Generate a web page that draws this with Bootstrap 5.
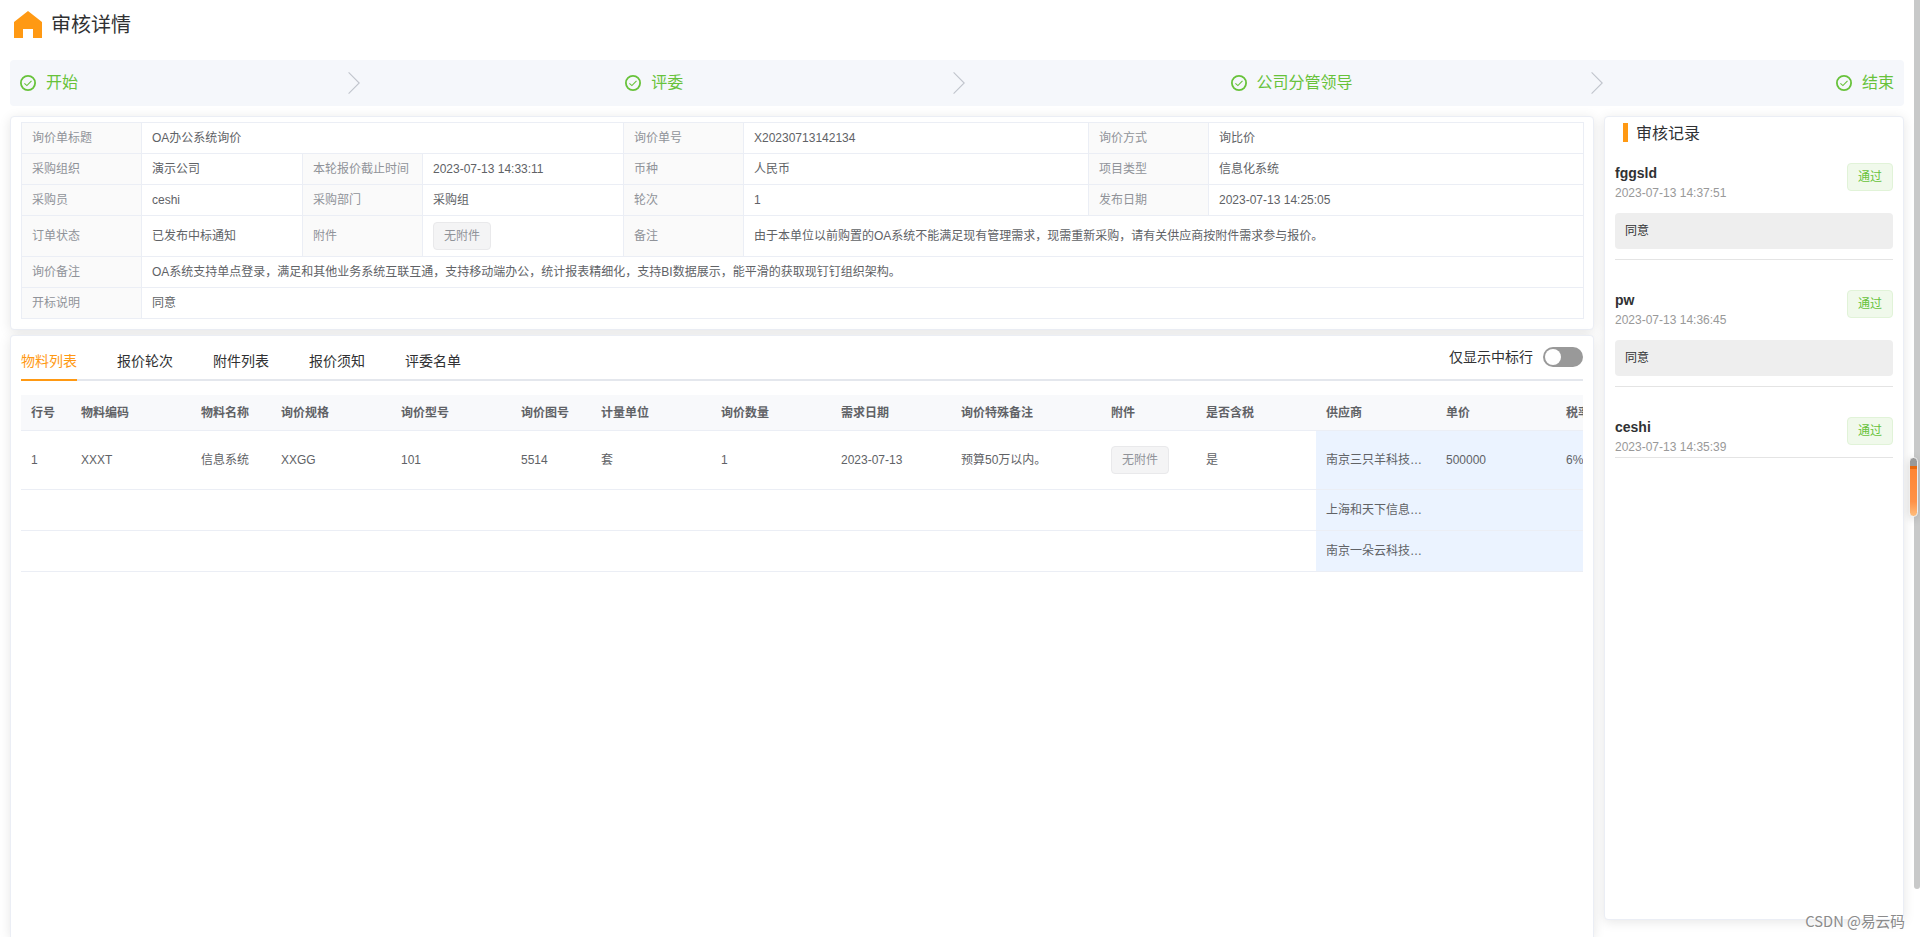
<!DOCTYPE html>
<html lang="zh-CN">
<head>
<meta charset="utf-8">
<title>审核详情</title>
<link rel="stylesheet" href="https://cdn.jsdelivr.net/npm/bootstrap@5.3.0/dist/css/bootstrap.min.css">
<style>
body{font-family:"Liberation Sans","Noto Sans CJK SC",sans-serif;font-size:12px;line-height:20px;color:#606266;background:#fff;height:937px}
.page-title{height:60px;padding:9px 0 0 10px;font-size:20px;line-height:32px;color:#303133}
.steps{height:46px;margin:0 16px 10px 10px;padding:0 10px;background:#f5f7fb;border-radius:4px;color:#67c23a;font-size:16px}
.steps .step{width:605.3px}
.steps svg.ok{margin-right:10px}
.steps .arrow{padding-left:5px}
.panel{background:#fff;border:1px solid #ebeef5;border-radius:4px;box-shadow:0 2px 12px rgba(0,0,0,.1)}
.main-col{width:1584px}
.side-col{width:300px;height:804px;margin-left:10px;padding:6px 10px 0;color:#303133}
.panel-info{height:214px;padding:5px 10px}
.panel-list{height:602px;margin-top:5px;padding:0 10px;border-bottom:0;border-radius:4px 4px 0 0}
.info{table-layout:fixed;width:1563px;border-collapse:collapse}
.info th,.info td{border:1px solid #ebeef5;padding:0 10px;height:31px;font-weight:400;white-space:nowrap}
.info th{background:#fafafa;color:#909399}
.info tr.tall>*{height:41px}
.tag{display:inline-block;height:28px;line-height:26px;padding:0 10px;border:1px solid #e9e9eb;border-radius:4px;background:#f4f4f5;color:#909399;vertical-align:middle}
.tag-ok{background:#f0f9eb;border-color:#e1f3d8;color:#67c23a}
.tabs{height:45px;border-bottom:2px solid #e4e7ed;font-size:14px;color:#303133}
.tabs .tab{height:45px;line-height:50px;margin-right:40px}
.tabs .tab.on{color:#ff9913;border-bottom:2px solid #ff9913}
.tabs .only-win{height:42px}
.toggle{width:40px;height:20px;border-radius:10px;background:#999;padding:2px;margin-left:10px}
.toggle i{display:block;width:16px;height:16px;border-radius:50%;background:#fff}
.items-wrap{width:1562px;margin-top:14px;overflow:hidden}
.items{table-layout:fixed;width:1655px;border-collapse:separate;border-spacing:0}
.items th,.items td{border-bottom:1px solid #ebeef5;padding:0 10px;white-space:nowrap;overflow:hidden;height:41px}
.items th{background:#f8f9fb;height:36px;font-weight:700}
.items tr.first td{height:59px}
.items td.win{background:#ebf3ff}
.side-title{font-size:16px;line-height:22px;height:20px;margin-left:8px}
.side-title span{width:5px;height:19px;background:#ff9913;margin-right:8px}
.log{height:127px;padding-top:30px}
.log.top{height:117px;padding-top:20px}
.log .inner{border-bottom:1px solid #e4e4e4;height:97px}
.log.short .inner{height:41px}
.log .who{font-size:14px;font-weight:700;line-height:20px}
.log .when{color:#999;line-height:20px;height:18px}
.log .say{height:36px;line-height:37px;margin-top:12px;padding:0 10px;border-radius:4px;background:#eee}
.thumb{right:0;top:0;width:6px;height:889px;background:#c8c9c9;border-radius:0 0 3px 3px}
.grip{left:1909px;top:457px;width:9px;height:60px;border:1px solid #eee;border-radius:5px;background:linear-gradient(#999 0 8px,#e8690f 8px 11px,#ff8533 11px,#ff9248 75%,#ffbd7c);box-shadow:0 2px 8px rgba(0,0,0,.15)}
.mark-text{right:15px;top:910px;font-family:"Noto Sans CJK SC",sans-serif;font-size:14.7px;line-height:22px;color:#8b8b8b;text-shadow:1px 1px 0 #fff}
</style>
</head>
<body class="position-relative overflow-hidden">
<svg class="d-none"><symbol id="ok" viewBox="0 0 16 16"><circle cx="8" cy="8" r="7.1" fill="none" stroke="#67c23a" stroke-width="1.8"/><path d="M4.4 8.3l2.5 2.3 4.6-4.7" fill="none" stroke="#67c23a" stroke-width="1.1"/></symbol>
<symbol id="arr" viewBox="0 0 12 22"><path d="M.6.4L11.2 11 .6 21.6" fill="none" stroke="#c0c4cc" stroke-width="1.1"/></symbol></svg>

<header class="page-title d-flex align-items-start">
  <svg width="37" height="32" viewBox="0 0 37 32" class="me-1"><path d="M18 2L4 13V29h9v-9h10v9h9V13z" fill="#ff9913"/></svg>
  <span>审核详情</span>
</header>

<div class="steps d-flex align-items-center">
  <div class="step d-flex align-items-center flex-shrink-0"><svg class="ok" width="16" height="16"><use href="#ok"/></svg><span>开始</span><div class="arrow flex-fill d-flex justify-content-center"><svg width="12" height="22"><use href="#arr"/></svg></div></div>
  <div class="step d-flex align-items-center flex-shrink-0"><svg class="ok" width="16" height="16"><use href="#ok"/></svg><span>评委</span><div class="arrow flex-fill d-flex justify-content-center"><svg width="12" height="22"><use href="#arr"/></svg></div></div>
  <div class="step d-flex align-items-center flex-shrink-0"><svg class="ok" width="16" height="16"><use href="#ok"/></svg><span>公司分管领导</span><div class="arrow flex-fill d-flex justify-content-center"><svg width="12" height="22"><use href="#arr"/></svg></div></div>
  <div class="d-flex align-items-center text-nowrap"><svg class="ok" width="16" height="16"><use href="#ok"/></svg><span>结束</span></div>
</div>

<div class="d-flex align-items-start" style="margin-left:10px">
  <main class="main-col">
    <section class="panel panel-info">
      <table class="info">
        <colgroup><col style="width:120px"><col style="width:161px"><col style="width:120px"><col style="width:201px"><col style="width:120px"><col style="width:345px"><col style="width:120px"><col></colgroup>
        <tr><th>询价单标题</th><td colspan="3">OA办公系统询价</td><th>询价单号</th><td>X20230713142134</td><th>询价方式</th><td>询比价</td></tr>
        <tr><th>采购组织</th><td>演示公司</td><th>本轮报价截止时间</th><td>2023-07-13 14:33:11</td><th>币种</th><td>人民币</td><th>项目类型</th><td>信息化系统</td></tr>
        <tr><th>采购员</th><td>ceshi</td><th>采购部门</th><td>采购组</td><th>轮次</th><td>1</td><th>发布日期</th><td>2023-07-13 14:25:05</td></tr>
        <tr class="tall"><th>订单状态</th><td>已发布中标通知</td><th>附件</th><td><span class="tag">无附件</span></td><th>备注</th><td colspan="3">由于本单位以前购置的OA系统不能满足现有管理需求，现需重新采购，请有关供应商按附件需求参与报价。</td></tr>
        <tr><th>询价备注</th><td colspan="7">OA系统支持单点登录，满足和其他业务系统互联互通，支持移动端办公，统计报表精细化，支持BI数据展示，能平滑的获取现钉钉组织架构。</td></tr>
        <tr><th>开标说明</th><td colspan="7">同意</td></tr>
      </table>
    </section>
    <section class="panel panel-list">
      <nav class="tabs d-flex">
        <div class="tab on">物料列表</div><div class="tab">报价轮次</div><div class="tab">附件列表</div><div class="tab">报价须知</div><div class="tab">评委名单</div>
        <div class="only-win ms-auto d-flex align-items-center"><span>仅显示中标行</span><div class="toggle"><i></i></div></div>
      </nav>
      <div class="items-wrap">
        <table class="items">
          <colgroup><col style="width:50px"><col style="width:120px"><col style="width:80px"><col style="width:120px"><col style="width:120px"><col style="width:80px"><col style="width:120px"><col style="width:120px"><col style="width:120px"><col style="width:150px"><col style="width:95px"><col style="width:120px"><col style="width:120px"><col style="width:120px"><col style="width:120px"></colgroup>
          <tr><th>行号</th><th>物料编码</th><th>物料名称</th><th>询价规格</th><th>询价型号</th><th>询价图号</th><th>计量单位</th><th>询价数量</th><th>需求日期</th><th>询价特殊备注</th><th>附件</th><th>是否含税</th><th>供应商</th><th>单价</th><th>税率</th></tr>
          <tr class="first"><td>1</td><td>XXXT</td><td>信息系统</td><td>XXGG</td><td>101</td><td>5514</td><td>套</td><td>1</td><td>2023-07-13</td><td>预算50万以内。</td><td><span class="tag">无附件</span></td><td>是</td><td class="win">南京三只羊科技…</td><td class="win">500000</td><td class="win">6%</td></tr>
          <tr><td colspan="12"></td><td class="win">上海和天下信息…</td><td class="win"></td><td class="win"></td></tr>
          <tr><td colspan="12"></td><td class="win">南京一朵云科技…</td><td class="win"></td><td class="win"></td></tr>
        </table>
      </div>
    </section>
  </main>
  <aside class="panel side-col">
    <div class="side-title d-flex"><span></span>审核记录</div>
    <div class="log top"><div class="inner"><div class="d-flex justify-content-between"><div><div class="who">fggsld</div><div class="when">2023-07-13 14:37:51</div></div><span class="tag tag-ok">通过</span></div><div class="say">同意</div></div></div>
    <div class="log"><div class="inner"><div class="d-flex justify-content-between"><div><div class="who">pw</div><div class="when">2023-07-13 14:36:45</div></div><span class="tag tag-ok">通过</span></div><div class="say">同意</div></div></div>
    <div class="log short"><div class="inner"><div class="d-flex justify-content-between"><div><div class="who">ceshi</div><div class="when">2023-07-13 14:35:39</div></div><span class="tag tag-ok">通过</span></div></div></div>
  </aside>
</div>

<div class="thumb position-absolute"></div>
<div class="grip position-absolute"></div>
<div class="mark-text position-absolute">CSDN @易云码</div>
<script src="https://cdn.jsdelivr.net/npm/bootstrap@5.3.0/dist/js/bootstrap.bundle.min.js"></script>
</body>
</html>
